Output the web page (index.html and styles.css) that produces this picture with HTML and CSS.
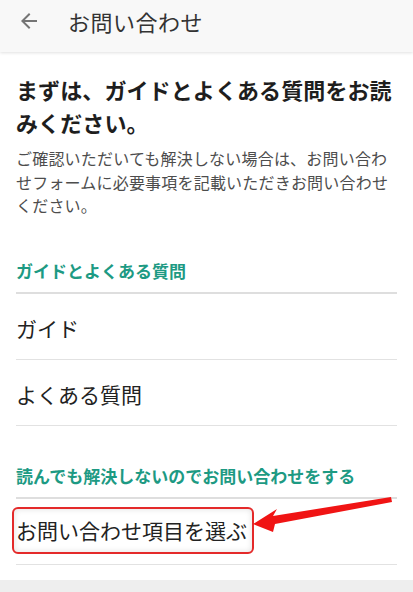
FILE: index.html
```html
<!DOCTYPE html>
<html lang="ja">
<head>
<meta charset="utf-8">
<link rel="stylesheet" href="styles.css">
</head>
<body>
<div class="page">
  <header class="appbar">
    <svg class="back" width="24" height="24" viewBox="0 0 24 24"><path d="M20 11H7.83l5.59-5.59L12 4l-8 8 8 8 1.41-1.41L7.83 13H20v-2z" fill="#757575"/></svg>
    <h1 class="title">お問い合わせ</h1>
  </header>
  <main class="content">
    <h2 class="lead">まずは、ガイドとよくある質問をお読みください。</h2>
    <p class="desc">ご確認いただいても解決しない場合は、お問い合わせフォームに必要事項を記載いただきお問い合わせください。</p>
    <section class="group">
      <h3 class="group-title">ガイドとよくある質問</h3>
      <div class="item">ガイド</div>
      <div class="item">よくある質問</div>
    </section>
    <section class="group second">
      <h3 class="group-title">読んでも解決しないのでお問い合わせをする</h3>
      <div class="item"><span class="marked">お問い合わせ項目を選ぶ</span></div>
    </section>
  </main>
  <div class="footer"></div>
  <svg class="annot" width="413" height="592" viewBox="0 0 413 592">
    <polygon points="253,524 277,509 273,516 391,497 392,502 275,524 273,532" fill="#f01414"/>
  </svg>
</div>
</body>
</html>
```

FILE: styles.css
```css
html, body {
  margin: 0;
  padding: 0;
  background: #fff;
}
body {
  font-family: "Noto Sans CJK JP", "Noto Sans", sans-serif;
  color: #222;
}
.page {
  position: relative;
  width: 413px;
  height: 592px;
  overflow: hidden;
  display: flex;
  flex-direction: column;
}
.appbar {
  height: 52px;
  flex: none;
  background: #f8f8f8;
  display: flex;
  align-items: center;
  padding: 0 0 10px 17px;
  box-sizing: border-box;
  box-shadow: 0 1px 3px rgba(0,0,0,0.12);
  position: relative;
  z-index: 1;
}
.back {
  width: 24px;
  height: 24px;
}
.title {
  margin: 0 0 0 27px;
  font-size: 22px;
  font-weight: 400;
  color: #333;
  line-height: 24px;
  letter-spacing: 0.5px;
}
.content {
  flex: 1;
  padding: 0 16px;
}
.lead {
  margin: 21px 0 0;
  font-size: 22px;
  font-weight: 700;
  line-height: 33px;
  color: #1e1e1e;
  letter-spacing: 0.1px;
}
.desc {
  margin: 8px 0 0;
  font-size: 16px;
  line-height: 23.5px;
  color: #4d4d4d;
  letter-spacing: 0.2px;
}
.group {
  margin-top: 41px;
}
.group.second {
  margin-top: 38px;
}
.group-title {
  margin: 0;
  font-size: 17px;
  font-weight: 700;
  line-height: 24px;
  color: #1d9a83;
  padding-bottom: 9px;
  border-bottom: 2px solid #dedede;
}
.item {
  height: 66px;
  display: flex;
  align-items: center;
  font-size: 21px;
  color: #222;
  border-bottom: 1px solid #e2e2e2;
  padding-top: 3px;
  box-sizing: border-box;
}
.marked {
  display: inline-block;
  margin-left: -4px;
  padding: 6px 5px 7px 2px;
  border: 2px solid #e42a2a;
  border-radius: 6px;
  box-shadow: inset 0 0 6px rgba(0,0,0,0.12);
  margin-top: -4px;
}
.footer {
  height: 12px;
  flex: none;
  background: #eeeeee;
}
.annot {
  position: absolute;
  left: 0;
  top: 0;
  pointer-events: none;
}
```
